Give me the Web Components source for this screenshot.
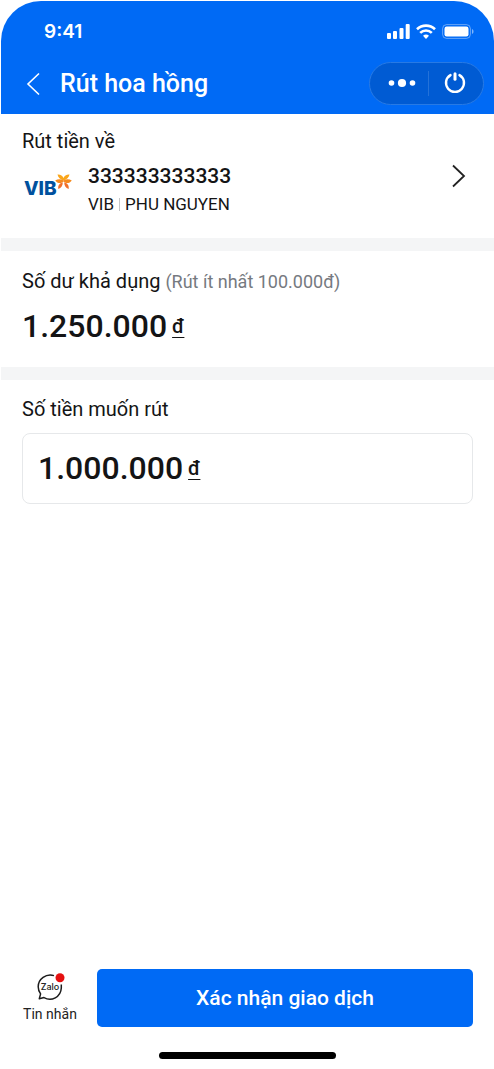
<!DOCTYPE html>
<html lang="vi">
<head>
<meta charset="utf-8">
<meta name="viewport" content="width=device-width, initial-scale=1">
<title>Rút hoa hồng</title>
<style>
html, body { margin: 0; height: 100%; background: #fff; }
body { font-family: Roboto, "Noto Sans", sans-serif; color: #141415; --blue: #006af5; --line: #e6e8ea; --band: #f4f5f6; --muted: #767a7f; }
</style>
</head>
<body>
<withdraw-screen></withdraw-screen>
<script>
const define = (name, html, init) => customElements.define(name, class extends HTMLElement {
  connectedCallback() {
    if (this.shadowRoot) return;
    const t = document.createElement('template');
    t.innerHTML = '<style>*{box-sizing:border-box}svg{display:block}</style>' + html;
    this.attachShadow({ mode: 'open' }).append(t.content.cloneNode(true));
    if (init) init(this);
  }
});

define('status-bar', `
<style>
:host { display: flex; align-items: center; justify-content: space-between; height: 61px; padding: 0 20px 0 43px; color: #fff; }
time { font: 600 19px/24px Inter, sans-serif; }
.icons { display: flex; align-items: center; gap: 6px; }
</style>
<time>9:41</time>
<div class="icons" aria-hidden="true">
  <svg width="23" height="15" viewBox="0 0 23 15" fill="#fff"><rect y="9" width="4" height="6" rx="1"/><rect x="6" y="7" width="4" height="8" rx="1"/><rect x="12.5" y="4" width="4" height="11" rx="1"/><rect x="18.700" y="0" width="4" height="15" rx="1"/></svg>
  <svg width="20" height="15" viewBox="0 0 20 15" fill="none" stroke="#fff" stroke-width="2.600"><path d="M1 5.200a13 13 0 0 1 18 0"/><path d="M4.200 8.900a8.300 8.300 0 0 1 11.600 0"/><path d="M10 15l-3-3.200a4.400 4.400 0 0 1 6 0z" fill="#fff" stroke="none"/></svg>
  <svg width="32" height="15" viewBox="0 0 32 15"><rect x=".6" y=".6" width="27.800" height="13.800" rx="4" fill="none" stroke="#fff" stroke-opacity=".4"/><rect x="2.500" y="2.500" width="24" height="10" rx="2.200" fill="#fff"/><path d="M30 5v5c2-.8 2-4.200 0-5z" fill="#fff" opacity=".5"/></svg>
</div>`);

define('app-bar', `
<style>
:host { display: flex; align-items: center; height: 43px; padding: 0 10px 0 23px; color: #fff; }
button { display: grid; place-items: center; padding: 0; border: 0; background: none; color: inherit; cursor: pointer; }
.back { width: 18px; height: 40px; }
h1 { flex: 1; margin: 0 0 0 18px; font-size: 25px; line-height: 32px; font-weight: 500; }
.capsule { display: flex; align-items: center; width: 115px; height: 43px; border: 1px solid #287ae4; border-radius: 22px; background: #005bd3; }
.capsule button { height: 42px; padding-bottom: 2px; }
.capsule .more { width: 58px; padding-left: 6px; }
.capsule .close { flex: 1; padding-right: 2px; }
.rule { width: 1px; height: 25px; background: #2472d9; }
</style>
<button class="back" aria-label="Quay lại"><svg width="14" height="24" viewBox="0 0 14 24" fill="none" stroke="#fff" stroke-width="1.600"><path d="M13 1.500L2 12l11 10.500"/></svg></button>
<h1><slot></slot></h1>
<div class="capsule">
  <button class="more" aria-label="Thêm"><svg width="28" height="10" viewBox="0 0 28 10" fill="#fff"><circle cx="3.500" cy="5" r="2.800"/><circle cx="14" cy="5" r="4.100"/><circle cx="24.500" cy="5" r="2.800"/></svg></button>
  <span class="rule"></span>
  <button class="close" aria-label="Đóng"><svg width="22" height="22" viewBox="0 0 22 22" fill="none" stroke="#fff" stroke-width="2.400" stroke-linecap="round"><path d="M6.500 3.100a9 9 0 1 0 9 0"/><path d="M11 1.800v5.400" stroke-width="3"/></svg></button>
</div>`);

define('vib-logo', `
<style>
:host { display: block; position: relative; width: 48px; height: 24px; color: #00519e; }
b { position: absolute; left: 0; bottom: 0; font: 800 19px/18px Inter, sans-serif; }
svg { position: absolute; right: 0; top: 0; }
</style>
<b>VIB</b>
<svg width="17" height="16" viewBox="0 0 17 16" aria-hidden="true"><path fill="#faa61a" d="M2.500.5C5.500.3 7.500 1.500 8.500 4c1-2.500 3-3.700 6-3.500-.6 3-2.600 5-6 6-3.400-1-5.400-3-6-6z"/><path fill="#f58a1f" d="M.2 6.500C3 4.800 6 5 8.500 6.500 11 5 14 4.800 16.800 6.500c-1.500 2.200-4 3-6.300 2.300L8.500 7.600 6.500 8.800C4.200 9.500 1.700 8.700.2 6.500z"/><path fill="#f2702a" d="M7.800 8.200C4.500 9 2.800 11.500 3.300 15c3-1.200 4.600-3.500 4.500-6.800zM9.200 8.200c3.300.8 5 3.300 4.500 6.800-3-1.200-4.600-3.500-4.500-6.800z"/></svg>`);

define('bank-account', `
<style>
:host { display: block; }
a { display: flex; align-items: flex-start; color: inherit; text-decoration: none; }
vib-logo { margin: 12px 16px 0 2px; }
.info { flex: 1; }
strong { display: block; font-size: 21px; line-height: 28px; font-weight: 500; }
.owner { display: flex; align-items: center; font-size: 17px; line-height: 24px; margin-top: 2px; }
.owner i { width: 1px; height: 13px; margin: 0 5px; background: #c4c6c9; }
.arrow { margin: 2px 7px 0 0; }
</style>
<a href="#account">
  <vib-logo></vib-logo>
  <span class="info"><strong><slot name="number"></slot></strong>
  <span class="owner"><slot name="bank"></slot><i></i><slot name="owner"></slot></span></span>
  <svg class="arrow" width="14" height="24" viewBox="0 0 14 24" fill="none" stroke="#222" stroke-width="1.800"><path d="M1 1.500L12 12 1 22.500"/></svg>
</a>`);

define('form-section', `
<style>
:host { display: block; padding: 14px 21px 0; }
:host([divided]) { border-bottom: 13px solid var(--band); }
h2 { margin: 0; font-size: 20px; line-height: 26px; font-weight: 400; }
</style>
<h2><slot name="label"></slot></h2><slot></slot>`);

define('money-amount', `
<style>
:host { display: flex; align-items: center; gap: 5px; font-size: 32px; line-height: 40px; font-weight: 500; }
u { font-size: 20px; line-height: 24px; text-underline-offset: 4px; text-decoration-thickness: 1px; text-decoration-skip-ink: none; }
</style>
<slot></slot><u>đ</u>`);

define('money-field', `
<style>
:host { display: block; }
.box { display: flex; align-items: center; height: 71px; padding: 0 15px 2px; border: 1px solid var(--line); border-radius: 8px; }
input { field-sizing: content; min-width: 0; margin: 0; padding: 0; border: 0; outline: 0; background: none; color: inherit; font: inherit; height: 40px; }
</style>
<div class="box"><money-amount><input aria-label="Số tiền muốn rút" inputmode="numeric"></money-amount></div>`,
host => { host.shadowRoot.querySelector('input').value = host.getAttribute('value'); });

define('chat-button', `
<style>
:host { display: block; }
button { display: flex; flex-direction: column; align-items: center; width: 56px; padding: 0; border: 0; background: none; font: 400 14px/20px Roboto, sans-serif; color: #222; white-space: nowrap; cursor: pointer; }
.icon { position: relative; width: 30px; height: 28px; margin-bottom: 3px; }
.icon b { position: absolute; left: 0; top: 8px; width: 30px; text-align: center; font: 500 9px/12px Inter, sans-serif; }
</style>
<button><span class="icon"><svg width="30" height="28" viewBox="-1 0 30 28" fill="none" stroke="#1c1c1c" stroke-width="1.500" stroke-linejoin="round"><path d="M18 2.600C10 .2 2.200 6 2.200 13.700c0 3 1 5.200 2.400 7.200l-1.300 4.800 4.700-1.100c7.500 4.200 16.800-.5 17.300-9.600v-3.500"/><circle cx="24" cy="4.800" r="4.500" fill="#e51010" stroke="none"/></svg><b>Zalo</b></span><slot></slot></button>`);

define('primary-button', `
<style>
:host { display: block; }
button { width: 100%; height: 58px; padding: 0; border: 0; border-radius: 5px; background: var(--blue); color: #fff; font: 500 21px/28px Roboto, sans-serif; cursor: pointer; }
</style>
<button><slot></slot></button>`);

define('withdraw-screen', `
<style>
:host { display: flex; flex-direction: column; min-height: 100vh; box-sizing: border-box; padding: 1px 0 0 1px; }
header { background: var(--blue); border-radius: 40px 40px 0 0; padding-bottom: 9px; }
main { flex: 1; }
.account { padding-bottom: 22px; }
bank-account { margin-top: 8px; }
.hint { color: var(--muted); font-size: 18px; }
.balance { padding-top: 17px; padding-bottom: 21px; }
.balance money-amount { margin-top: 11px; }
.amount { padding-top: 16px; }
money-field { margin-top: 11px; }
footer { display: flex; flex-direction: column; align-items: center; gap: 25px; padding: 0 21px 10px; }
.actions { display: flex; align-items: center; gap: 19px; width: 100%; }
primary-button { flex: 1; }
.home { width: 177px; height: 7px; border-radius: 4px; background: #000; }
</style>
<header><status-bar></status-bar><app-bar>Rút hoa hồng</app-bar></header>
<main>
  <form-section divided class="account"><span slot="label">Rút tiền về</span>
    <bank-account><span slot="number">333333333333</span><span slot="bank">VIB</span><span slot="owner">PHU NGUYEN</span></bank-account>
  </form-section>
  <form-section divided class="balance"><span slot="label">Số dư khả dụng <span class="hint">(Rút ít nhất 100.000đ)</span></span>
    <money-amount>1.250.000</money-amount>
  </form-section>
  <form-section class="amount"><span slot="label">Số tiền muốn rút</span>
    <money-field value="1.000.000"></money-field>
  </form-section>
</main>
<footer>
  <div class="actions"><chat-button>Tin nhắn</chat-button><primary-button>Xác nhận giao dịch</primary-button></div>
  <div class="home"></div>
</footer>`);
</script>
</body>
</html>
